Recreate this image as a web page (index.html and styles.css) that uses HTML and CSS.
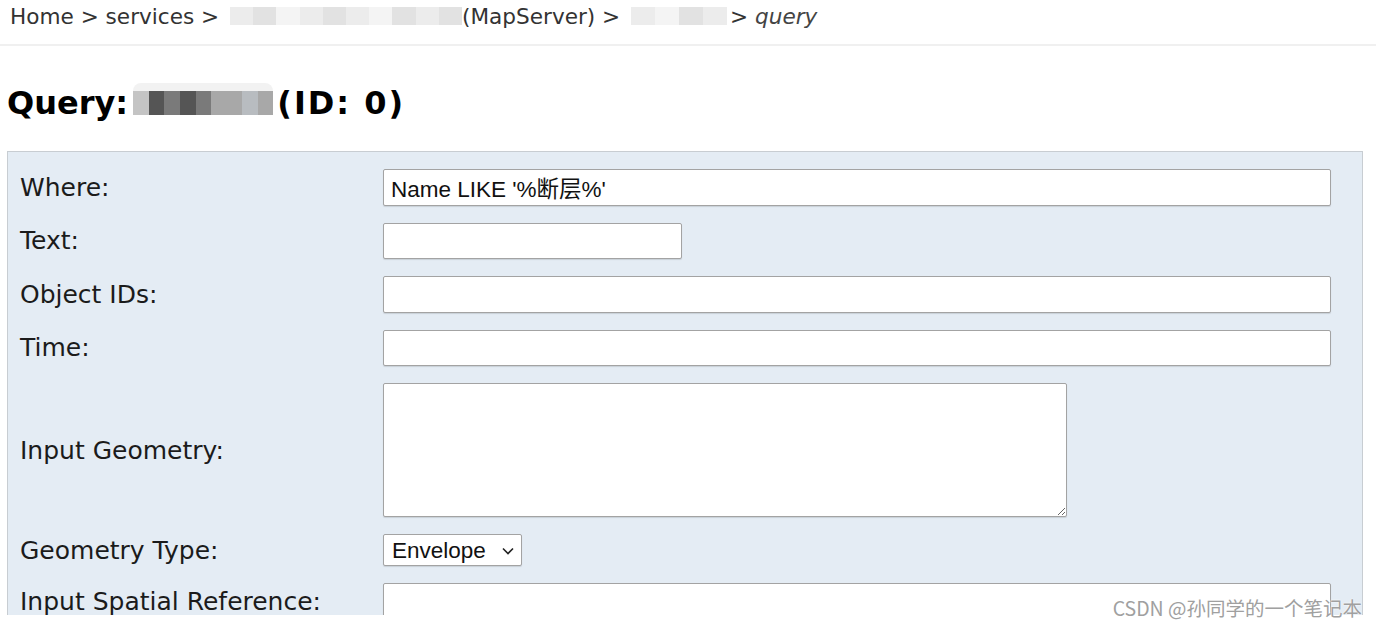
FILE: index.html
```html
<!DOCTYPE html>
<html lang="en">
<head>
    <meta charset="UTF-8">
    <title>Query (ID: 0)</title>
    <link rel="stylesheet" href="styles.css">
</head>
<body>

<div class="page">
    <div class="crumbs">
        Home &gt; services &gt;
        <span class="blur">
            <span class="px l1"></span><span class="px l2"></span><span class="px l3"></span><span class="px l1"></span><span class="px l2"></span><span class="px l1"></span><span class="px l3"></span><span class="px l2"></span><span class="px l1"></span><span class="px l2"></span>
        </span>(MapServer) &gt;
        <span class="blur short">
            <span class="px l1"></span><span class="px l3"></span><span class="px l2"></span><span class="px l1"></span>
        </span>&gt; <i>query</i>
    </div>

    <h2 class="title">Query:
        <span class="blur-dark">
            <span class="pd d3"></span><span class="pd d1"></span><span class="pd d2"></span><span class="pd d1"></span><span class="pd d2"></span><span class="pd d4"></span><span class="pd d4"></span><span class="pd d5"></span><span class="pd d4"></span>
        </span><span class="layer-id">(ID: 0)</span></h2>

    <form class="panel">
        <label class="lbl" for="where">Where:</label>
        <div><input class="txt wide" type="text" id="where" value="Name LIKE '%断层%'"></div>

        <label class="lbl" for="text">Text:</label>
        <div><input class="txt short" type="text" id="text"></div>

        <label class="lbl" for="objectIds">Object IDs:</label>
        <div><input class="txt wide" type="text" id="objectIds"></div>

        <label class="lbl" for="time">Time:</label>
        <div><input class="txt wide" type="text" id="time"></div>

        <label class="lbl" for="geometry">Input Geometry:</label>
        <div><textarea class="area" id="geometry"></textarea></div>

        <label class="lbl" for="geometryType">Geometry Type:</label>
        <div>
            <span class="sel-wrap">
                <select class="sel" id="geometryType">
                    <option>Envelope</option>
                    <option>Point</option>
                    <option>Polyline</option>
                    <option>Polygon</option>
                    <option>Multipoint</option>
                </select>
                <svg class="chev" width="14" height="10" viewBox="0 0 14 10"><path d="M2 2.5 L7 7.5 L12 2.5" fill="none" stroke="#222" stroke-width="1.6"/></svg>
            </span>
        </div>

        <label class="lbl" for="inSR">Input Spatial Reference:</label>
        <div><input class="txt wide" type="text" id="inSR"></div>
    </form>
</div>

<div class="mark">CSDN @孙同学的一个笔记本</div>

</body>
</html>
```

FILE: styles.css
```css
body {
    margin: 0;
    background: #fff;
    font-family: "DejaVu Sans", Verdana, sans-serif;
    color: #1b1b1b;
}
.page {
    height: 615px;
    overflow: hidden;
}
.crumbs {
    height: 41px;
    padding: 3px 0 0 10px;
    font-size: 21.6px;
    line-height: 28px;
    color: #333;
    border-bottom: 2px solid #f0f0f0;
    white-space: nowrap;
}
.crumbs i {
    color: #444;
}
.blur {
    display: inline-flex;
    vertical-align: middle;
    width: 232px;
    height: 18px;
    margin: -4px 0 0 4px;
}
.blur.short {
    width: 96px;
    margin-right: 3px;
}
.px {
    flex: 1;
}
.l1 { background: #ececec; }
.l2 { background: #e2e2e2; }
.l3 { background: #f4f4f4; }

.title {
    margin: 37px 0 28px 7px;
    font-size: 32px;
    line-height: 40px;
    color: #000;
}
.layer-id {
    letter-spacing: 2px;
}
.blur-dark {
    display: inline-flex;
    vertical-align: middle;
    width: 140px;
    height: 24px;
    margin: -4px 4px 0 -6px;
    border-radius: 8px;
    box-shadow: 0 -8px 0 #f2f2f2;
}
.pd {
    flex: 1;
}
.d1 { background: #555; }
.d2 { background: #7a7a7a; }
.d3 { background: #c4c4c4; }
.d4 { background: #a8a8a8; }
.d5 { background: #b8bcc0; }

.panel {
    display: grid;
    grid-template-columns: 363px 1fr;
    row-gap: 17px;
    align-items: center;
    margin: 0 13px 0 7px;
    padding: 17px 31px 30px 12px;
    background: #e4ecf4;
    border: 1px solid #c8cdd2;
}
.lbl {
    font-size: 25px;
    color: #1b1b1b;
}
.txt, .area, .sel {
    box-sizing: border-box;
    font-family: "Liberation Sans", Arial, "Noto Sans CJK SC", sans-serif;
    font-size: 22.5px;
    color: #111;
    background: #fff;
    border: 1px solid #a3a3a3;
    border-radius: 2px;
    box-shadow: 0 1px 1px rgba(0, 0, 0, 0.12);
    display: block;
}
.txt {
    height: 36.5px;
    padding: 0 7px;
}
.wide {
    width: 948px;
}
.short {
    width: 299px;
}
.area {
    width: 684px;
    height: 134px;
}
.sel-wrap {
    position: relative;
    display: inline-block;
    vertical-align: top;
}
.sel {
    appearance: none;
    -webkit-appearance: none;
    width: 139px;
    height: 32px;
    padding: 0 0 0 8px;
}
.chev {
    position: absolute;
    right: 7px;
    top: 12px;
    pointer-events: none;
}
.mark {
    position: absolute;
    right: 14px;
    top: 595px;
    font-family: "Noto Sans CJK SC", sans-serif;
    font-size: 19.5px;
    line-height: 26px;
    color: #a0a0a0;
    text-shadow: 0 0 2px #fff, 0 0 1px #fff;
}
```
